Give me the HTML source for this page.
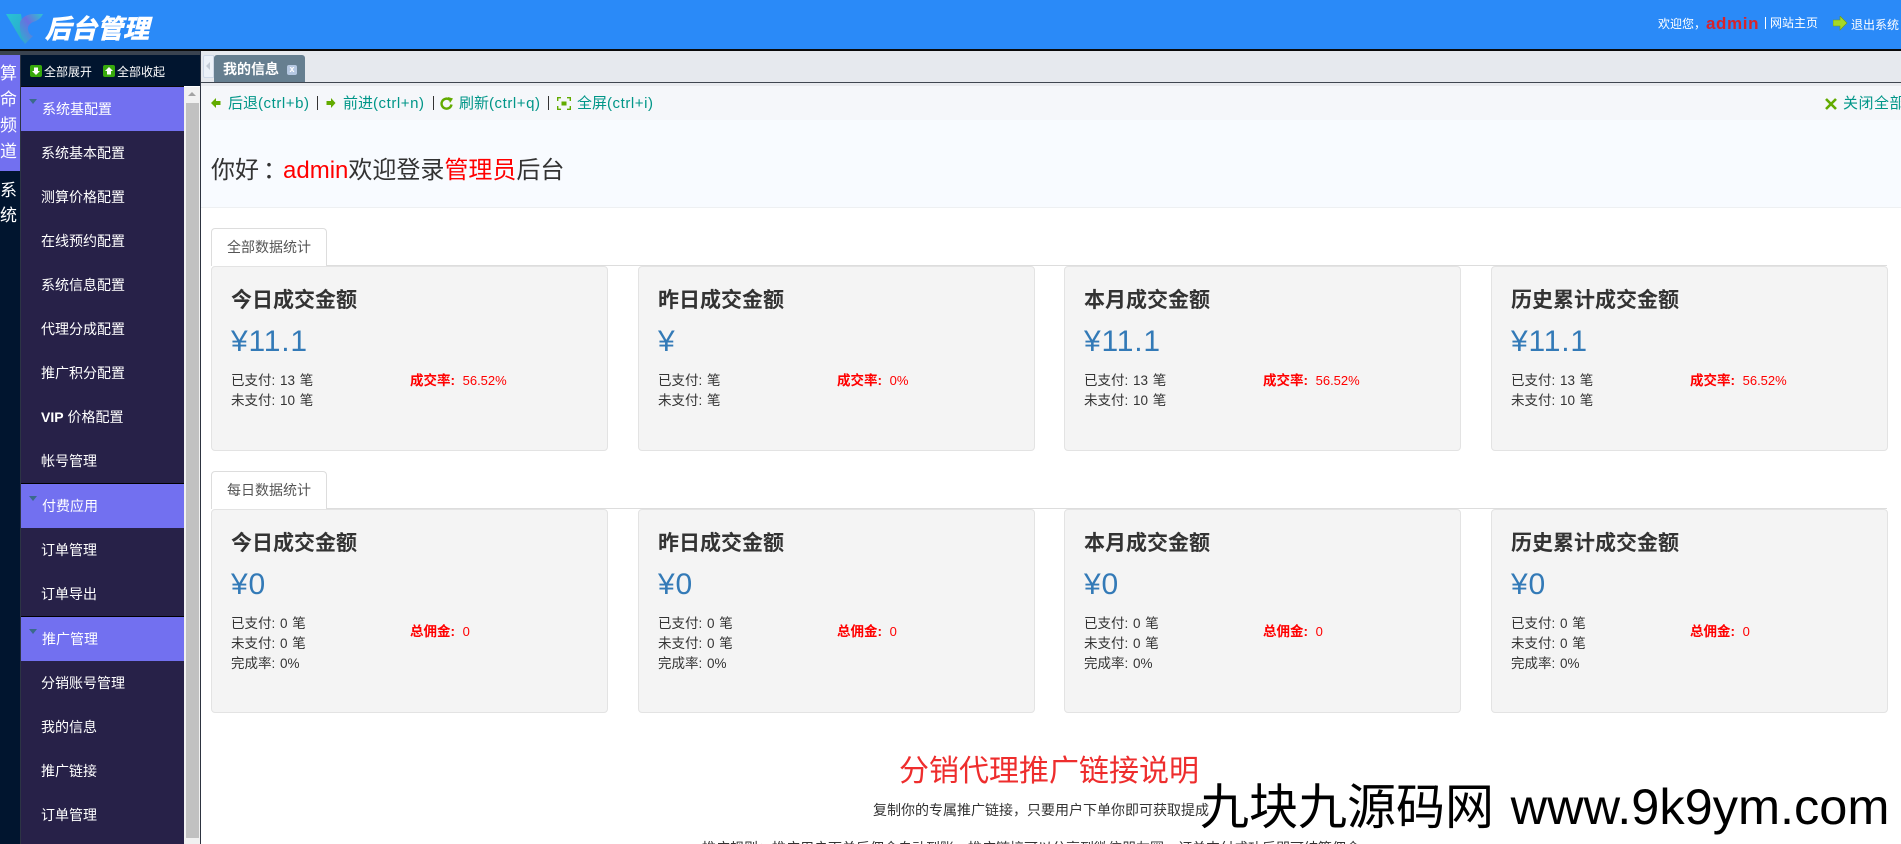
<!DOCTYPE html>
<html lang="zh-CN">
<head>
<meta charset="utf-8">
<title>后台管理</title>
<style>
*{box-sizing:border-box;margin:0;padding:0}
html,body{width:1901px;height:844px;overflow:hidden;background:#fff;font-family:"Liberation Sans","Noto Sans CJK SC",sans-serif;color:#333}
#root{position:relative;width:1901px;height:844px;overflow:hidden;background:#fff}
.a{position:absolute;white-space:nowrap}
#top{position:absolute;left:0;top:0;width:1901px;height:49px;background:#2a8af8}
#topline{position:absolute;left:0;top:49px;width:1901px;height:2px;background:#0a0a0a}
.px{font-family:"Liberation Sans","WenQuanYi Zen Hei",sans-serif}
.tr{color:#fff;font-size:12px;line-height:16px;top:16px}
#lstrip{position:absolute;left:0;top:51px;width:200px;height:4px;background:#3a4350}
#l1{position:absolute;left:0;top:55px;width:20px;height:789px;background:#01152f}
#l1sep{position:absolute;left:20px;top:55px;width:1px;height:789px;background:#2c3444}
#l1act{position:absolute;left:0;top:55px;width:20px;height:116px;background:#7270f0}
.lc{position:absolute;left:0;width:20px;color:#fff;font-size:17px;line-height:26px;overflow:hidden;white-space:nowrap}
#exp{position:absolute;left:21px;top:55px;width:179px;height:31px;background:#01152f}
#expline{position:absolute;left:21px;top:86px;width:163px;height:1px;background:#0a0a0a}
#menu{position:absolute;left:21px;top:87px;width:163px;height:757px;background:#272148;overflow:hidden}
.h,.i{position:absolute;left:0;width:163px;height:44px;line-height:44px;color:#fff;font-size:14px;white-space:nowrap}
.h{background:#7270f0;padding-left:21px}
.i{padding-left:20px}
.blk{position:absolute;left:0;width:163px;height:1px;background:#000}
.tri{position:absolute;left:8px;width:0;height:0;border-left:4px solid transparent;border-right:4px solid transparent;border-top:5px solid #3a6a8c}
#track{position:absolute;left:184px;top:87px;width:16px;height:757px;background:#f1f1f1}
#thumb{position:absolute;left:186px;top:103px;width:13px;height:735px;background:#c1c1c1}
#ar{position:absolute;left:188px;top:92px;width:0;height:0;border-left:4px solid transparent;border-right:4px solid transparent;border-bottom:4px solid #a3a3a3}
#vline{position:absolute;left:200px;top:51px;width:1px;height:793px;background:#2d3340}
#tabs{position:absolute;left:201px;top:51px;width:1700px;height:31px;background:#e6e9ee}
#tabline{position:absolute;left:201px;top:82px;width:1700px;height:1px;background:#3f4650}
#tabgap{position:absolute;left:201px;top:83px;width:1700px;height:3px;background:#e9ebef}
#lbtn{position:absolute;left:203px;top:55px;width:11px;height:23px;background:#edf2f9;border:1px solid #cfd9e8;border-radius:2px 0 0 2px}
#tab{position:absolute;left:214px;top:55px;width:91px;height:27px;background:#667f90;border-radius:3px 3px 0 0;color:#fff;font-weight:bold;font-size:14px;line-height:29px;padding-left:9px;white-space:nowrap}
#tabx{position:absolute;left:287px;top:65px;width:10px;height:10px;background:#b5c8e2;border-radius:2px;color:#fff;font:bold 9px/9px "Liberation Sans",sans-serif;text-align:center}
#bar{position:absolute;left:201px;top:86px;width:1700px;height:34px;background:#f5f7fa}
.t{color:#009688;font-size:15px;line-height:20px;top:94px}
.t span{letter-spacing:.55px}
.s{position:absolute;top:96px;width:1px;height:14px;background:#333}
#hello{position:absolute;left:201px;top:120px;width:1700px;height:88px;background:#f8fbff;border-bottom:1px solid #eef0f2}
#hi{left:211px;top:150px;font-size:24px;line-height:36px;color:#333}
.red{color:#f00}
.navl{position:absolute;height:1px;background:#ddd;left:211px;width:1676px}
.tb{position:absolute;left:211px;width:116px;background:#fff;border:1px solid #ddd;border-bottom:none;border-radius:4px 4px 0 0;color:#555;font-size:14px;text-align:center;line-height:36px;height:38px}
.c{position:absolute;width:397px;background:#f4f4f4;border:1px solid #e3e3e3;border-radius:4px}
.c b.ti{position:absolute;left:19px;font-size:21px;line-height:28px;color:#333;white-space:nowrap;font-weight:bold}
.c .am{position:absolute;left:19px;top:58px;font-size:30px;line-height:34px;color:#337ab7;white-space:nowrap;letter-spacing:.8px}
.c .ln{position:absolute;left:19px;top:104px;font-size:13.5px;line-height:20px;color:#333;white-space:nowrap;word-spacing:1px}
.c .rd{position:absolute;left:198px;font-size:13px;line-height:20px;color:#f00;white-space:nowrap;word-spacing:4px}
.c .rd b{font-size:13.5px}
.sec1{height:185px;top:266px}
.sec2{height:204px;top:509px}
.sec1 b.ti{top:20px}.sec2 b.ti{top:20px}
.sec1 .rd{top:104px}.sec2 .rd{top:112px}
#h2{left:899px;top:752px;font-size:30px;line-height:40px;color:#ee2d2d}
#sub{left:873px;top:800px;font-size:14px;line-height:20px;color:#333}
#clip{left:702px;top:838px;font-size:14px;line-height:20px;color:#333}
#wm{left:1200px;top:777px;font-size:49px;line-height:60px;color:#000}
#wm span{font-size:50.5px;margin-left:3px}
</style>
</head>
<body>
<div id="root">
<div id="top"></div>
<div id="topline"></div>
<svg style="position:absolute;left:4px;top:10px" width="44" height="36" viewBox="0 0 44 36">
<defs>
<linearGradient id="g1" x1="0" y1="0" x2="1" y2="1"><stop offset="0" stop-color="#29c2d6"/><stop offset="1" stop-color="#2aa8c8"/></linearGradient>
<linearGradient id="g2" x1="0" y1="1" x2="1" y2="0"><stop offset="0" stop-color="#25b6cf"/><stop offset=".55" stop-color="#6a6fe0"/><stop offset="1" stop-color="#2fc3d0"/></linearGradient>
</defs>
<path d="M2 4 L17 4 Q18 13 21 20 L21 33 Q17 30 15 26 Z" fill="url(#g1)"/>
<path d="M16 12 Q20 4 30 4 L39 4 Q36 10 29 12 Q23 15 24 20 Q25 25 29 26 L21 34 Q15 24 16 12 Z" fill="url(#g2)"/>
</svg>
<div class="a" style="left:45px;top:12px;font-size:26px;line-height:34px;font-weight:bold;font-style:italic;color:#fff;-webkit-text-stroke:.6px #fff">后台管理</div>

<div class="a tr px" style="left:1658px">欢迎您，</div>
<div class="a" style="left:1706px;top:15px;font:bold 17px/18px 'Liberation Sans',sans-serif;color:#d8232a;letter-spacing:.6px">admin</div>
<div class="a" style="left:1765px;top:17px;width:1px;height:12px;background:#fff"></div>
<div class="a tr px" style="left:1770px;top:15px">网站主页</div>
<svg style="position:absolute;left:1833px;top:16px" width="15" height="16" viewBox="0 0 15 16"><path d="M0 4 H7 V0 L14 7 L7 14 V10 H0 Z" fill="#a6d826" stroke="#6f9a16" stroke-width=".6"/></svg>
<div class="a tr px" style="left:1851px;top:17px">退出系统</div>

<div id="lstrip"></div>
<div id="l1"></div>
<div id="l1act"></div>
<div id="l1sep"></div>
<div class="lc px" style="top:61px;height:104px">算<br>命<br>频<br>道</div>
<div class="lc px" style="top:178px;height:52px;line-height:25px">系<br>统</div>

<div id="exp"></div>
<div id="expline"></div>
<svg style="position:absolute;left:30px;top:65px" width="12" height="12" viewBox="0 0 12 12"><rect width="12" height="12" rx="2" fill="#37a90c"/><path d="M4 2.5 H8 V6 H10 L6 10 L2 6 H4 Z" fill="#fff"/></svg>
<div class="a px" style="left:44px;top:64px;color:#fff;font-size:12px;line-height:16px">全部展开</div>
<svg style="position:absolute;left:103px;top:65px" width="12" height="12" viewBox="0 0 12 12"><rect width="12" height="12" rx="2" fill="#37a90c"/><path d="M4 9.5 H8 V6 H10 L6 2 L2 6 H4 Z" fill="#fff"/></svg>
<div class="a px" style="left:117px;top:64px;color:#fff;font-size:12px;line-height:16px">全部收起</div>

<div id="menu" class="px">
<div class="h" style="top:0">系统基配置</div><div class="tri" style="top:12px"></div>
<div class="i" style="top:44px">系统基本配置</div>
<div class="i" style="top:88px">测算价格配置</div>
<div class="i" style="top:132px">在线预约配置</div>
<div class="i" style="top:176px">系统信息配置</div>
<div class="i" style="top:220px">代理分成配置</div>
<div class="i" style="top:264px">推广积分配置</div>
<div class="i" style="top:308px"><b>VIP</b> 价格配置</div>
<div class="i" style="top:352px">帐号管理</div>
<div class="blk" style="top:396px"></div>
<div class="h" style="top:397px">付费应用</div><div class="tri" style="top:409px"></div>
<div class="i" style="top:441px">订单管理</div>
<div class="i" style="top:485px">订单导出</div>
<div class="blk" style="top:529px"></div>
<div class="h" style="top:530px">推广管理</div><div class="tri" style="top:542px"></div>
<div class="i" style="top:574px">分销账号管理</div>
<div class="i" style="top:618px">我的信息</div>
<div class="i" style="top:662px">推广链接</div>
<div class="i" style="top:706px">订单管理</div>
</div>
<div id="track"></div><div id="ar"></div><div id="thumb"></div>

<div id="vline"></div>
<div id="tabs"></div>
<div id="tabline"></div>
<div id="tabgap"></div>
<div id="lbtn"></div>
<div class="a" style="left:206px;top:62px;width:0;height:0;border-top:4px solid transparent;border-bottom:4px solid transparent;border-right:4px solid #c3cbd6"></div>
<div id="tab">我的信息</div>
<div id="tabx">x</div>

<div id="bar"></div>
<svg style="position:absolute;left:211px;top:98px" width="10" height="10" viewBox="0 0 10 10"><path d="M0 5 L5 0 V3 H9.5 V7 H5 V10 Z" fill="#62ab00"/></svg>
<div class="a t" style="left:228px">后退<span>(ctrl+b)</span></div>
<div class="s" style="left:317px"></div>
<svg style="position:absolute;left:326px;top:98px" width="10" height="10" viewBox="0 0 10 10"><path d="M9.5 5 L5 0 V3 H.5 V7 H5 V10 Z" fill="#62ab00"/></svg>
<div class="a t" style="left:343px">前进<span>(ctrl+n)</span></div>
<div class="s" style="left:433px"></div>
<svg style="position:absolute;left:440px;top:97px" width="14" height="13" viewBox="0 0 14 13"><path d="M11.5 7.5 A5 5 0 1 1 9.5 2.6" fill="none" stroke="#62ab00" stroke-width="2.4"/><path d="M8 0 L13 1.5 L10 6 Z" fill="#62ab00"/></svg>
<div class="a t" style="left:459px">刷新<span>(ctrl+q)</span></div>
<div class="s" style="left:548px"></div>
<svg style="position:absolute;left:557px;top:97px" width="14" height="13" viewBox="0 0 14 13"><path d="M.7 4 V.7 H4 M10 .7 H13.3 V4 M13.3 9 V12.3 H10 M4 12.3 H.7 V9" fill="none" stroke="#62ab00" stroke-width="1.4"/><rect x="4.5" y="4.5" width="5" height="4" fill="#62ab00"/></svg>
<div class="a t" style="left:577px">全屏<span>(ctrl+i)</span></div>
<svg style="position:absolute;left:1825px;top:98px" width="12" height="12" viewBox="0 0 12 12"><path d="M1 1 L11 11 M11 1 L1 11" stroke="#62ab00" stroke-width="2.6"/></svg>
<div class="a t" style="left:1843px;letter-spacing:.5px">关闭全部</div>

<div id="hello"></div>
<div class="a" id="hi">你好<span style='font-family:"Noto Sans CJK TC",sans-serif;position:relative;left:4px'>：</span><span class="red">admin</span>欢迎登录<span class="red">管理员</span>后台</div>

<div class="navl" style="top:265px"></div>
<div class="tb" style="top:228px">全部数据统计</div>
<div class="c sec1" style="left:211px"><b class="ti">今日成交金额</b><div class="am">¥11.1</div><div class="ln">已支付: 13 笔<br>未支付: 10 笔</div><div class="rd"><b>成交率:</b> 56.52%</div></div>
<div class="c sec1" style="left:638px"><b class="ti">昨日成交金额</b><div class="am">¥</div><div class="ln">已支付: 笔<br>未支付: 笔</div><div class="rd"><b>成交率:</b> 0%</div></div>
<div class="c sec1" style="left:1064px"><b class="ti">本月成交金额</b><div class="am">¥11.1</div><div class="ln">已支付: 13 笔<br>未支付: 10 笔</div><div class="rd"><b>成交率:</b> 56.52%</div></div>
<div class="c sec1" style="left:1491px"><b class="ti">历史累计成交金额</b><div class="am">¥11.1</div><div class="ln">已支付: 13 笔<br>未支付: 10 笔</div><div class="rd"><b>成交率:</b> 56.52%</div></div>

<div class="navl" style="top:508px"></div>
<div class="tb" style="top:471px">每日数据统计</div>
<div class="c sec2" style="left:211px"><b class="ti">今日成交金额</b><div class="am">¥0</div><div class="ln">已支付: 0 笔<br>未支付: 0 笔<br>完成率: 0%</div><div class="rd"><b>总佣金:</b> 0</div></div>
<div class="c sec2" style="left:638px"><b class="ti">昨日成交金额</b><div class="am">¥0</div><div class="ln">已支付: 0 笔<br>未支付: 0 笔<br>完成率: 0%</div><div class="rd"><b>总佣金:</b> 0</div></div>
<div class="c sec2" style="left:1064px"><b class="ti">本月成交金额</b><div class="am">¥0</div><div class="ln">已支付: 0 笔<br>未支付: 0 笔<br>完成率: 0%</div><div class="rd"><b>总佣金:</b> 0</div></div>
<div class="c sec2" style="left:1491px"><b class="ti">历史累计成交金额</b><div class="am">¥0</div><div class="ln">已支付: 0 笔<br>未支付: 0 笔<br>完成率: 0%</div><div class="rd"><b>总佣金:</b> 0</div></div>

<div class="a" id="h2">分销代理推广链接说明</div>
<div class="a" id="sub">复制你的专属推广链接，只要用户下单你即可获取提成</div>
<div class="a" id="clip">推广规则：推广用户下单后佣金自动到账，推广链接可以分享到微信朋友圈，订单支付成功后即可结算佣金</div>
<div class="a" id="wm">九块九源码网 <span>www.9k9ym.com</span></div>
</div>
</body>
</html>
